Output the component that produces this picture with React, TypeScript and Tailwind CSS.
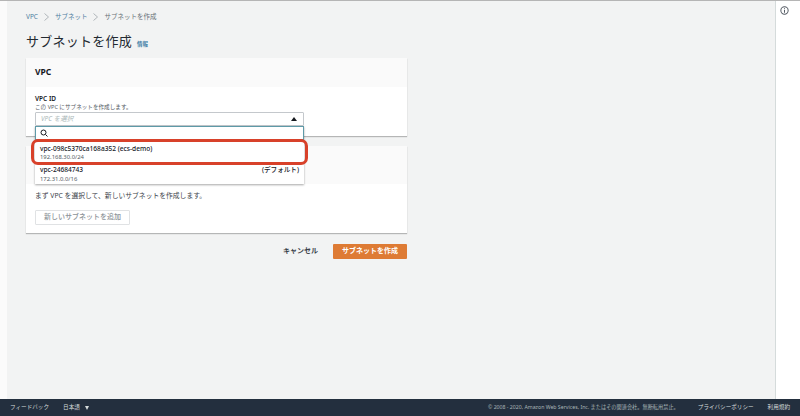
import React from "react";

const font = { fontFamily: '"Noto Sans", "Noto Sans CJK JP", sans-serif' };

export default function App() {
  return (
    <div style={font} className="w-[800px] h-[416px] flex flex-col overflow-hidden bg-white text-[#16191f] antialiased">
      <div className="h-[1px] bg-[#b5b5b5] shrink-0" />
      <div className="flex-1 flex min-h-0">
        <div className="w-[7px] bg-[#fbfbfb] shrink-0" />
        <main className="w-[768px] bg-[#f2f3f3] pl-[19px] shrink-0">
          <nav className="flex items-center h-[12px] mt-[10px] text-[6.5px] leading-[12px]">
            <span className="text-[#4f7f9f]">VPC</span>
            <Chevron />
            <span className="text-[#4f7f9f]">サブネット</span>
            <Chevron />
            <span className="text-[#687078]">サブネットを作成</span>
          </nav>
          <div className="flex items-baseline mt-[7px] h-[22px]">
            <h1 className="text-[13px] leading-[22px] tracking-[0.25px] text-[#232a31]">サブネットを作成</h1>
            <span className="ml-[5px] text-[5.5px] text-[#3f7ea6] font-bold">情報</span>
          </div>
          <div className="mt-[6px] w-[381px] flex flex-col">
            <section className="relative bg-white shadow-[0_1px_1px_rgba(0,0,0,0.25)] h-[78px]">
              <div className="h-[29px] bg-[#fafafa] px-[9px] flex items-center text-[8.5px] font-bold">VPC</div>
              <div className="pl-[9px] pt-[7px]">
                <div className="text-[6.5px] leading-[9px] font-semibold">VPC ID</div>
                <div className="text-[5.6px] leading-[8px] text-[#545b64]">この VPC にサブネットを作成します。</div>
                <div className="relative z-10 mt-[1px] w-[269px]">
                  <div className="h-[14px] border border-[#c4c8cc] bg-white rounded-[1px] flex items-center justify-between pl-[5px] pr-[6px]">
                    <span className="text-[6.5px] italic text-[#aab7b8]">VPC を選択</span>
                    <span className="w-0 h-0 border-x-[3px] border-x-transparent border-b-[4px] border-b-[#16191f]" />
                  </div>
                  <div className="absolute left-0 top-[14px] w-full bg-white shadow-[0_1px_2px_rgba(0,0,0,0.35)]">
                    <div className="h-[14px] border border-[#5e9aa8] flex items-center pl-[4px]">
                      <svg width="8" height="8" viewBox="0 0 16 16" fill="none" stroke="#16191f" strokeWidth="2">
                        <circle cx="7" cy="7" r="5" />
                        <path d="M11 11l4 4" />
                      </svg>
                    </div>
                    <div className="h-[23px] px-[5px] pt-[5px] bg-white">
                      <div className="text-[6.6px] leading-[8px] font-medium">vpc-098c5370ca168a352 (ecs-demo)</div>
                      <div className="text-[5.9px] leading-[6px] mt-[1px] text-[#545b64]">192.168.30.0/24</div>
                    </div>
                    <div className="h-[21px] px-[5px] pt-[2px]">
                      <div className="flex justify-between text-[6.6px] leading-[10px] font-medium">
                        <span>vpc-24684743</span>
                        <span>(デフォルト)</span>
                      </div>
                      <div className="text-[5.9px] leading-[8px] text-[#545b64]">172.31.0.0/16</div>
                    </div>
                    <div className="absolute left-[-4px] top-[13px] w-[277px] h-[26px] border-[3px] border-[#d8412a] rounded-[7px]" />
                  </div>
                </div>
              </div>
            </section>
            <section className="mt-[10px] bg-white shadow-[0_1px_1px_rgba(0,0,0,0.25)] h-[87px]">
              <div className="h-[38px] bg-[#fafafa]" />
              <div className="pl-[9px] pt-[7px]">
                <div className="text-[6.8px] leading-[10px] text-[#3b424a]">まず VPC を選択して、新しいサブネットを作成します。</div>
                <div className="mt-[9px] w-[95px] h-[15px] border border-[#e0e2e4] rounded-[1px] flex items-center justify-center text-[7px] text-[#8d9499] font-medium">
                  新しいサブネットを追加
                </div>
              </div>
            </section>
            <div className="mt-[11px] flex justify-end items-center">
              <span className="text-[7px] font-bold text-[#3b424a] mr-[15px]">キャンセル</span>
              <span className="w-[74px] h-[15px] bg-[#de7b34] rounded-[1px] flex items-center justify-center text-[7px] font-bold text-white">
                サブネットを作成
              </span>
            </div>
          </div>
        </main>
        <aside className="flex-1 bg-white border-l border-[#d5dbdb] pl-[4px] pt-[5px]">
          <svg width="9" height="9" viewBox="0 0 16 16" fill="none" stroke="#545b64" strokeWidth="1.8">
            <circle cx="8" cy="8" r="6.5" />
            <path d="M8 7v5M8 4v1.6" />
          </svg>
        </aside>
      </div>
      <footer className="h-[17px] shrink-0 bg-[#232f3e] flex items-center pl-[10px] text-[5.6px] text-[#d5dbdb]">
        <span>フィードバック</span>
        <span className="ml-[14px]">日本語</span>
        <span className="ml-[5px] w-0 h-0 border-x-[2.5px] border-x-transparent border-t-[4px] border-t-[#d5dbdb]" />
        <span className="ml-auto text-[5.2px] text-[#aab7b8]">© 2008 - 2020, Amazon Web Services, Inc. またはその関連会社。無断転用禁止。</span>
        <span className="ml-[19px]">プライバシーポリシー</span>
        <span className="ml-[14px] mr-[10px]">利用規約</span>
      </footer>
    </div>
  );
}

function Chevron() {
  return (
    <svg className="mx-[6px]" width="5" height="8" viewBox="0 0 5 8" fill="none" stroke="#a0a6ab" strokeWidth="0.8">
      <path d="M0.5 0.5L4.5 4L0.5 7.5" />
    </svg>
  );
}
